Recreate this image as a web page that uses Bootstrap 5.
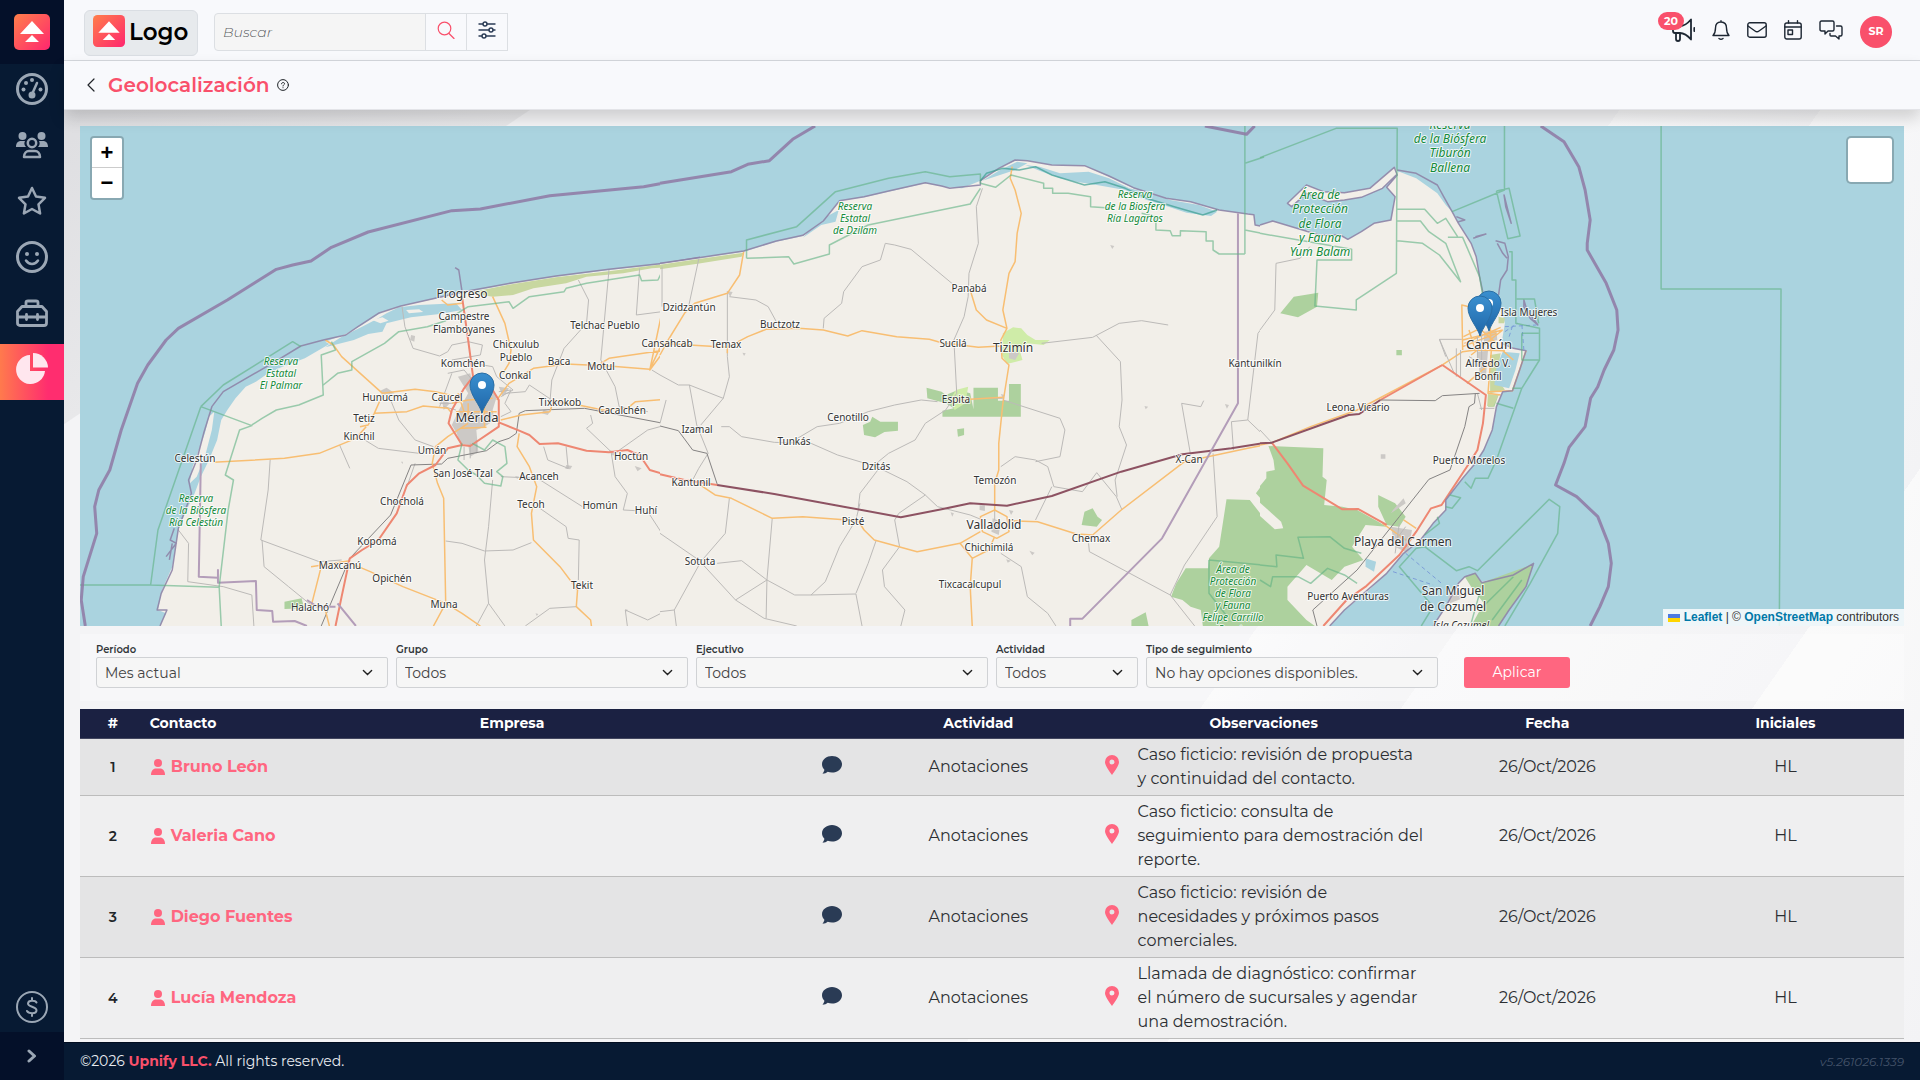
<!DOCTYPE html>
<html lang="es">
<head>
<meta charset="utf-8">
<meta name="viewport" content="width=device-width, initial-scale=1">
<title>Geolocalización</title>
<link href="https://cdn.jsdelivr.net/npm/bootstrap@5.3.0/dist/css/bootstrap.min.css" rel="stylesheet">
<style>
:root{--navy:#071a33;--pink:#ff6680;--brand:#f9506b}
body{font-family:Montserrat,Inter,"Noto Sans",sans-serif;font-size:16px;color:#212529;background:#f4f4f6}
svg{display:block;flex:none}
.ln{fill:none;stroke:currentColor;stroke-linecap:round;stroke-linejoin:round}
.side{width:64px;background:var(--navy);color:#9ba7b5;flex:none}
.side-top{height:64px;background:#041029}
.side-end{height:48px;background:#041029;color:#9ba7b5}
.side-item{height:56px;padding-bottom:6px;color:#9ba7b5}
.side-item.low{padding:6px 0 0}
.side-item.on{background:linear-gradient(90deg,#ff7a4d,#ff2d6f 75%);color:#ffe6ee}
.topbar{height:61px;background:#f8f9fc;border-bottom:1px solid #d5d8dd;padding:0 28px 0 20px}
.logo-box{width:114px;height:46px;margin-top:5px;background:#e7eaed;border:1px solid #dadee3;border-radius:6px;color:#000;font-size:23px;font-weight:600;padding:0 0 0 8px}
.logo-box svg{margin-bottom:4px}
.finder{width:294px;height:38px;margin-left:16px;margin-top:4px}
.finder .form-control{background:#f5f5f5;border-color:#dcdfe3;font-style:italic;font-weight:300;font-size:14px;padding:0 8px;color:#555;border-radius:4px}
.finder .btn{width:42px;border-color:#dcdfe3;background:#f8f9fc;padding:0 11px 4px;border-radius:0;color:#2a3b55}
.top-icons{gap:17px}
.top-icons a{color:#1d2733}
.news-badge{left:-13px;top:-6px;width:26px;height:18px;line-height:18px;border-radius:9px;background:var(--brand);color:#fff;font-size:11px;font-weight:700;text-align:center}
.avatar{width:32px;height:32px;margin-top:3px;border-radius:50%;background:var(--brand);color:#fff;font-size:11px;font-weight:700}
.titlebar{height:49px;background:#f8f9fc;border-bottom:1px solid #e3e4e8;box-shadow:0 8px 16px rgba(0,0,0,.16);padding:0 20px;position:relative;z-index:2}
.titlebar h1{font-size:20px;font-weight:600;color:var(--brand);margin:0 8px 0 13px}
.work{padding:16px 16px 3px;background:
 linear-gradient(146deg,#dedee1 0,#e8e8ea 260px,transparent 261px),
 linear-gradient(125deg,transparent 62%,#f9f9fa 62%,#f2f2f4 70%,#f8f8f9 70%,#f3f3f5 84%,#fafafa 84%,#f3f3f5)}
.map-box{height:500px;background:#aad3df;overflow:hidden}
.map-svg{width:100%;height:500px}
.map-svg path{vector-effect:non-scaling-stroke;fill:none;stroke-linejoin:round}
.map-svg .land{fill:#f2efe9}
.map-svg .sea{fill:#aad3df}
.map-svg .wood{fill:#add19e}
.map-svg .mangrove{fill:#c8d7a0}
.map-svg .town{fill:#ccc9c6}
.map-svg .suburb{fill:#cfeca8}
.map-svg .limit{stroke:#8f79a5;stroke-width:3;opacity:.85}
.map-svg .shore{stroke:#8f85a8;stroke-width:1.5;opacity:.9}
.map-svg .state{stroke:#b39db9;stroke-width:2}
.map-svg .park{stroke:#5fb283;stroke-width:1.5;opacity:.6}
.map-svg .minor{stroke:#bcbab8;stroke-width:1}
.map-svg .main-rd{stroke:#f8be72;stroke-width:1.5}
.map-svg .trunk{stroke:#ee8772;stroke-width:2}
.map-svg .rail{stroke:#858383;stroke-width:1}
.map-svg .toll{stroke:#8d5262;stroke-width:2}
.map-svg .ferry{stroke:#7d9ed8;stroke-width:1;stroke-dasharray:4 3}
.map-svg .reef{stroke:#3c9f91;stroke-width:1.5;opacity:.7}
.map-svg text{font-family:"Noto Sans",sans-serif;font-size:10px;text-anchor:middle;fill:#333;stroke:#fff;stroke-opacity:.75;stroke-width:2px;paint-order:stroke;stroke-linejoin:round}
.map-svg .t12 text{font-size:12px}
.map-svg .t13 text{font-size:13px}
.map-svg .nat text{fill:#148a3a;font-style:italic}
.zoomer{left:10px;top:10px;border:2px solid rgba(0,0,0,.2);border-radius:4px;background-clip:padding-box}
.zoomer button{width:30px;height:30px;border:0;background:#fff;color:#000;font:bold 22px/28px "Liberation Sans",sans-serif;padding:0}
.zoomer button:first-child{border-bottom:1px solid #ccc;border-radius:2px 2px 0 0}
.zoomer button:last-child{border-radius:0 0 2px 2px}
.layers{right:10px;top:10px;width:48px;height:48px;border:2px solid rgba(0,0,0,.2);border-radius:5px;background:#fff;background-clip:padding-box}
.credits{right:0;bottom:0;height:17px;padding:0 5px;background:rgba(255,255,255,.8);font:12px/17px "Liberation Sans",sans-serif;color:#333}
.credits a{color:#0078a8;text-decoration:none;font-weight:700}
.filters{margin-top:8px;padding:8px 16px 13px;background:rgba(255,255,255,.3);gap:8px;height:67px}
.filters label{display:block;font-size:10px;line-height:14px;font-weight:600;color:#33373b}
.filters .form-select{height:31px;font-size:14px;line-height:20px;padding:0 32px 0 8px;border:1px solid #d0d2d5;border-radius:2px 2px 4px 4px;background-color:#f6f6f6;color:#444;background-size:11px 11px;background-position:right 14px center;
--bs-form-select-bg-img:url("data:image/svg+xml,%3csvg xmlns='http://www.w3.org/2000/svg' viewBox='0 0 16 16'%3e%3cpath fill='none' stroke='%23222' stroke-width='2' stroke-linecap='round' d='m2 5 6 6 6-6'/%3e%3c/svg%3e")}
.w-wide{width:292px}.w-slim{width:142px}
.btn-apply{width:106px;height:31px;margin-left:18px;padding:0;border:0;border-radius:3px;background:var(--pink);color:#fff;font-size:14px}
.report{margin:8px 0 0;table-layout:fixed;--bs-table-bg:transparent}
.report>:not(caption)>*>*{padding:4px;border-bottom:1px solid #bcbcbc;vertical-align:middle;line-height:24px;background:transparent;text-align:center}
.report thead th{background:#1b2142;color:#fff;font-size:14px;font-weight:700;line-height:21px;border-color:#42465f}
.report tbody tr{background:#efeff0}
.report tbody tr:nth-child(odd){background:#e4e4e5}
.report tbody td{font-size:16px;color:#2c2f33}
.report tbody th{font-size:14px;font-weight:600}
.report .to-left{text-align:left}
.person{color:var(--pink);font-weight:700;font-size:16px;text-decoration:none;gap:5px}
.note{gap:19px;text-align:left;padding-left:1px;white-space:nowrap}
.foot{height:38px;background:var(--navy);border-top:1px solid #020d20;color:#e8ebf0;font-size:14px;padding:0 16px}
.foot b{color:var(--brand)}
.foot i{color:#44536a;font-size:12px}
</style>
<script src="https://cdn.jsdelivr.net/npm/bootstrap@5.3.0/dist/js/bootstrap.bundle.min.js"></script>
</head>
<body>
<svg width="0" height="0" class="position-absolute" aria-hidden="true">
<defs>
<linearGradient id="warm" x1="0" y1="0" x2="1" y2="1"><stop offset="0" stop-color="#ff7f4a"/><stop offset="1" stop-color="#ff266f"/></linearGradient>
<linearGradient id="blue" x1="0" y1="0" x2="0" y2="1"><stop offset="0" stop-color="#3a8fcf"/><stop offset="1" stop-color="#1f66a8"/></linearGradient>
<symbol id="brand" viewBox="0 0 36 36"><rect width="36" height="36" rx="5" fill="url(#warm)"/><path fill="#fff" d="M18 7 30 20H6zM18 21l7 7H11z"/></symbol>
<symbol id="user" viewBox="0 0 16 16"><circle cx="8" cy="4" r="4"/><path d="M1 16c0-4 2-6.500 5-6.500h4c3 0 5 2.500 5 6.500z"/></symbol>
<symbol id="talk" viewBox="0 0 20 18"><path d="M10 0c5.500 0 10 3.600 10 8.300s-4.500 8.300-10 8.300c-1.500 0-3-.3-4.300-.8C4.500 16.800 2.600 17.800.5 17.800c1-1.200 1.700-2.700 1.900-4C.9 12.300 0 10.400 0 8.300 0 3.600 4.500 0 10 0z"/></symbol>
<symbol id="place" viewBox="0 0 14 20"><path fill-rule="evenodd" d="M7 0a7 7 0 0 1 7 7c0 3.500-4.500 9.500-7 13-2.500-3.500-7-9.500-7-13a7 7 0 0 1 7-7zm0 4.500a2.500 2.500 0 1 0 0 5 2.500 2.500 0 0 0 0-5z"/></symbol>
<g id="marker"><path d="M0 0C-2-8-12-18-12-28a12 12 0 0 1 24 0C12-18 2-8 0 0z" style="fill:url(#blue);stroke:#2a6ea5;stroke-width:1"/><circle cx="0" cy="-28" r="4" fill="#fff"/></g>
</defs>
</svg>
<div class="d-flex min-vh-100">
<nav class="side d-flex flex-column" aria-label="Principal">
 <a href="#" class="side-top d-flex align-items-center justify-content-center" aria-label="Inicio"><svg width="36" height="36"><use href="#brand"/></svg></a>
 <a href="#" class="side-item d-flex align-items-center justify-content-center" aria-label="Tablero"><svg class="ln" width="32" height="32" viewBox="0 0 32 32" stroke-width="3"><circle cx="16" cy="16" r="14.500"/><path d="m17 19 4-9" stroke-width="2.500"/><circle cx="16" cy="22" r="2" fill="currentColor"/><g fill="currentColor" stroke="none"><circle cx="7.500" cy="16.500" r="2"/><circle cx="10" cy="10" r="2"/><circle cx="16" cy="7" r="2"/><circle cx="24.500" cy="16.500" r="2"/></g></svg></a>
 <a href="#" class="side-item d-flex align-items-center justify-content-center" aria-label="Contactos"><svg width="32" height="28" viewBox="0 0 32 28" fill="currentColor"><circle cx="6.500" cy="5" r="4"/><circle cx="25.500" cy="5" r="4"/><path d="M0 16c0-4 2-6 5-6h4c-1 2-1 4 1 6zM32 16c0-4-2-6-5-6h-4c1 2 1 4-1 6z"/><g class="ln" stroke-width="2.500"><circle cx="16" cy="12" r="4.200"/><path d="M8 26c0-4 2.500-6 5-6h6c2.500 0 5 2 5 6z"/></g></svg></a>
 <a href="#" class="side-item d-flex align-items-center justify-content-center" aria-label="Favoritos"><svg class="ln" width="30" height="30" viewBox="0 0 30 30" stroke-width="2.500"><path d="m15 2 4 8.500 9 1.300-6.500 6.500 1.600 9.200L15 23l-8.100 4.500 1.600-9.200L2 11.800l9-1.300z"/></svg></a>
 <a href="#" class="side-item d-flex align-items-center justify-content-center" aria-label="Clientes"><svg class="ln" width="32" height="32" viewBox="0 0 32 32" stroke-width="3"><circle cx="16" cy="16" r="14.500"/><path d="M10 19.500c3 4.500 9 4.500 12 0" stroke-width="2.500"/><g fill="currentColor" stroke="none"><circle cx="11" cy="13" r="2"/><circle cx="21" cy="13" r="2"/></g></svg></a>
 <a href="#" class="side-item d-flex align-items-center justify-content-center" aria-label="Herramientas"><svg class="ln" width="32" height="28" viewBox="0 0 32 28" stroke-width="2.800"><path d="M10 7V3.500Q10 2 12 2h8q2 0 2 1.500V7M6 7.500h20l4.500 5V24q0 2.500-2.500 2.500H4Q1.500 26.500 1.500 24V12.500zM2 18h28M10.500 15.500v5M21.500 15.500v5"/></svg></a>
 <a href="#" class="side-item on d-flex align-items-center justify-content-center" aria-label="Reportes" aria-current="page"><svg width="32" height="32" viewBox="0 0 32 32" fill="currentColor"><path d="M14 2v16h15A14.500 14.500 0 1 1 14 2z"/><path d="M17 0a15 15 0 0 1 15 14.500H17z"/></svg></a>
 <a href="#" class="side-item low mt-auto d-flex align-items-center justify-content-center" aria-label="Ventas"><svg class="ln" width="32" height="32" viewBox="0 0 32 32" stroke-width="2"><circle cx="16" cy="16" r="15"/><path d="M20.500 11.500c-1-2-8-3-8.500.8-.4 4 8.500 2.800 8.500 7 0 4-8 3.500-9.500.7M16 7v2.500M16 22.500V25"/></svg></a>
 <button type="button" class="side-end border-0 d-flex align-items-center justify-content-center" aria-label="Expandir"><svg class="ln" width="10" height="14" viewBox="0 0 10 14" stroke-width="3"><path d="m2 2 5.500 5L2 12"/></svg></button>
</nav>
<div class="flex-grow-1 d-flex flex-column" style="min-width:0">
<header class="topbar d-flex align-items-center">
 <a href="#" class="logo-box d-flex align-items-center gap-1 text-decoration-none"><svg width="32" height="32"><use href="#brand"/></svg>Logo</a>
 <form class="finder input-group flex-nowrap">
  <input class="form-control" type="search" placeholder="Buscar" aria-label="Buscar">
  <button class="btn" type="button" aria-label="Buscar"><svg class="ln" style="color:#f9506b" width="18" height="18" viewBox="0 0 18 18" stroke-width="1.200"><circle cx="7.500" cy="7.500" r="6.300"/><path d="m12 12.500 5 5"/></svg></button>
  <button class="btn" type="button" aria-label="Filtros"><svg class="ln" width="18" height="18" viewBox="0 0 18 18" stroke-width="1.400"><path d="M1 3h4M9 3h8M1 9h10M15 9h2M1 15h3M8 15h9"/><circle cx="7" cy="3" r="2"/><circle cx="13" cy="9" r="2"/><circle cx="6" cy="15" r="2"/></svg></button>
 </form>
 <div class="top-icons d-flex align-items-center ms-auto">
  <a href="#" class="position-relative" aria-label="Novedades"><svg class="ln" width="24" height="24" viewBox="0 0 24 24" stroke-width="1.800"><path d="M2 8h7c4 0 8-3 11-6.500v20C17 18 13 15 9 15H4q-2 0-2-2zM5 15v6q0 2 2 2t2-2v-6M23.300 10v3"/></svg><span class="news-badge position-absolute">20</span></a>
  <a href="#" aria-label="Avisos"><svg class="ln" width="18" height="20" viewBox="0 0 18 20" stroke-width="1.400"><path d="M9 2c-4 0-5.500 3-5.500 6 0 4-1 6-2.500 7.500h16C15.500 14 14.500 12 14.500 8c0-3-1.500-6-5.500-6zM9 .8V2M7 18.500q2 1.500 4 0"/></svg></a>
  <a href="#" aria-label="Correo"><svg class="ln" width="20" height="16" viewBox="0 0 20 16" stroke-width="1.400"><rect x=".8" y=".8" width="18.400" height="14.400" rx="2"/><path d="m1 4 7 5q2 1.500 4 0l7-5"/></svg></a>
  <a href="#" aria-label="Agenda"><svg class="ln" width="18" height="20" viewBox="0 0 18 20" stroke-width="1.400"><rect x=".8" y="3" width="16.400" height="16" rx="2"/><path d="M1 7h16M4.500.8V3M13.500.8V3"/><rect x="4" y="10" width="4.500" height="4.500"/></svg></a>
  <a href="#" aria-label="Chat"><svg class="ln" width="24" height="20" viewBox="0 0 24 20" stroke-width="1.400"><path d="M2.500 1h11Q15 1 15 2.500v7q0 1.500-1.500 1.500H9l-3 3v-3H2.500Q1 11 1 9.500v-7Q1 1 2.500 1zM17.500 6h4Q23 6 23 7.500v7q0 1.500-1.500 1.500H20v3l-3.500-3H12q-1 0-1-1v-1.500"/></svg></a>
  <a href="#" class="avatar d-flex align-items-center justify-content-center text-decoration-none text-white">SR</a>
 </div>
</header>
<div class="titlebar d-flex align-items-center">
 <a href="#" aria-label="Volver" class="text-dark" style="margin-left:3px"><svg class="ln" width="8" height="14" viewBox="0 0 8 14" stroke-width="1.200"><path d="M7 1 1 7l6 6"/></svg></a>
 <h1>Geolocalización</h1>
 <a href="#" aria-label="Ayuda" class="text-dark"><svg class="ln" width="12" height="12" viewBox="0 0 12 12" stroke-width="1"><circle cx="6" cy="6" r="5.400"/><path d="M4.500 4.800C4.500 3 7.500 3 7.500 4.700 7.500 5.800 6 5.800 6 7M6 8.700v.1"/></svg></a>
</div>
<main class="work flex-grow-1">
 <div class="map-box position-relative">
 <svg class="map-svg" viewBox="80 126 1824 500" preserveAspectRatio="xMidYMid slice" role="img" aria-label="Mapa de Yucatán y Quintana Roo">
 <!-- west: Celestún to Motul -->
 <g transform="translate(60 110) scale(.40816 .33333)">
  <path class="land" d="M1568 445 1480 462 1345 480 1215 500 1110 520 1000 545 930 563 835 588 790 605 740 645 700 672 650 695 660 702 600 745 545 770 510 790 480 815 455 830 430 865 410 900 395 930 385 990 365 1050 345 1100 330 1150 310 1200 290 1260 275 1370 250 1440 240 1500 260 1510 245 1548H1568z"/>
  <path class="land" d="M355 970 365 920 378 905 372 960 355 1040 335 1100 318 1120 325 1070z"/>
  <path class="sea" d="M830 592 880 585 970 580 985 600 930 612 860 622 800 640 790 665 755 672 720 690 650 712 690 680 740 650 780 625 800 610z"/>
  <path class="land" d="M765 630 790 622 805 632 785 640zM848 600 880 598 890 606 855 610z"/>
  <path class="mangrove" d="M1000 548 1110 522 1215 502 1345 484 1568 448V465L1450 475 1380 490 1290 500 1240 520 1160 535 1110 555 1060 560z"/>
  <path class="wood" d="M550 1475 592 1465 598 1495 550 1497zM985 940 1000 950 1000 1000 985 985z"/>
  <path class="town" d="M975 800 1005 790 1010 815 1050 830 1070 860 1060 900 1065 930 1040 950 1020 960 1025 1025 1005 1040 1000 1005 980 1000 972 970 960 945 975 905 1000 850zM785 842 800 833 820 850 790 856zM935 865 955 880 940 900zM1240 1065 1255 1068 1250 1078 1238 1076zM1408 1068 1425 1075 1415 1084zM1345 1020 1362 1025 1355 1038zM860 675 870 678 868 695 858 690zM1185 900 1200 905 1195 915 1180 910zM1075 830 1100 835 1085 860zM1115 1098 1125 1100 1120 1107zM835 1055 840 1055 840 1062zM1165 1510 1172 1512 1168 1518zM1385 1497 1392 1500 1386 1506z"/>
  <path class="minor" d="M838 590 845 650 865 715 930 738 950 725 960 705 1000 695 1035 705 1030 735 960 750M960 790 945 840 930 890M950 790 990 780 1010 810M1010 760 1060 770 1070 800 1110 840 1080 860M1075 845 1105 840 1090 880 1105 905 1080 920M1150 825 1205 870 1190 890M1150 825 1140 845 1090 850M1345 480 1325 750 1360 830 1370 890 1440 905M1270 510 1295 570 1290 640 1235 715 1205 810 1200 880M1420 475 1412 615 1475 605 1480 470M1300 915 1305 940 1290 955 1350 1025 1360 1100 1390 1150 1380 1200 1410 1202M1450 780 1510 825 1550 823 1568 840M1510 825 1480 880 1490 935M1185 1010 1195 1050 1245 1075 1240 1010M1365 1025 1440 960 1500 940M1080 1100 1170 1105 1280 1190M1170 1190 1240 1250 1245 1285 1272 1290 1270 1410M945 1293 985 1300 1040 1323 1110 1320 1155 1298M1060 1110 1050 1250 1040 1350 1050 1480 1020 1548M1050 1480 1090 1548M1440 1205 1480 1280 1540 1340 1568 1360M1265 1490 1200 1495 1140 1548M1568 1395 1530 1420 1505 1490 1440 1530 1385 1500 1390 1548M515 1048 510 1140 492 1290 635 1355 690 1350M495 1290 500 1370 560 1430 620 1490M740 985 780 1015 880 1030M810 870 830 930 870 990 915 1010M685 1005 710 1075M870 1060 850 1130M290 1260 315 1300 313 1415 400 1430 470 1455 475 1548M1540 925 1560 945M930 880H960M940 890 970 900M990 1010V1050M1005 1000V1045M1020 990V1030"/>
  <path class="rail" d="M640 1548 710 1345 810 1215 860 1065 935 1062 950 1045 1045 1022 1075 995 1100 985 1118 970 1125 910 1140 902 1285 895 1500 945 1520 975 1550 1020 1568 1025"/>
  <path class="main-rd" d="M1060 560 1090 640 1105 720 1100 760 1085 790M650 690 670 705 690 740 790 850 870 838 920 845 955 855M770 910 850 905 890 888 950 895 960 910M790 855 770 910 755 945 735 950M750 950 725 985 635 1030 550 1045 375 1057M1000 940 950 980 920 1010 912 1060 925 1120 940 1165 945 1480 915 1548M712 1360 760 1385 840 1430 945 1480 985 1510 1030 1548M1125 970 1120 1010 1150 1070 1168 1130 1155 1210 1160 1290 1225 1370 1268 1440 1265 1490 1300 1530 1302 1548M640 1370 615 1490M615 1370 710 1352M1070 870 1100 820 1160 775 1240 762 1345 768 1445 778 1475 700 1568 700M1325 760 1345 745 1530 712M1080 930 1130 915 1200 905 1210 870 1260 885M1270 885 1330 900 1390 895 1410 875 1485 868M1475 605 1445 780 1500 690 1535 600 1568 570M935 570 950 585 985 580M650 1500 660 1548M960 880 1000 870 1060 865M1000 880 1000 930M1040 870V950M975 850 990 905M970 905H1070M985 955 1045 952"/>
  <path class="trunk" d="M985 560 1000 690 1012 800 990 835 960 900 952 940 985 1005 1005 1008 1075 950 1075 870 1060 840M1075 937 1125 962 1150 975 1175 1002 1220 1000 1290 1022 1345 1027 1390 1020 1420 1035 1445 1080 1500 1100 1568 1112M985 1005 950 1015 920 1065 880 1090 850 1125 825 1210 780 1290 740 1320 710 1345 690 1460 675 1548"/>
  <path class="shore" d="M1568 442 1480 460 1345 478 1215 498 1110 518 1050 532 985 546 930 562 835 588 780 610 730 650 700 675 645 690 590 708 520 760 400 845 372 890 352 970 335 1050 315 1110 322 1150 310 1190 290 1255 275 1380 248 1450 238 1500 262 1500 245 1548M985 545 977 480 968 473M280 1255 270 1290 285 1300 260 1340M268 1350 275 1300"/>
  <path class="state" d="M345 1060 340 1400 387 1403V1380L387 1418 480 1413 482 1500 520 1503 522 1535 575 1533 605 1548M680 1480 725 1548M675 1490 630 1490 605 1470"/>
  <path class="park" d="M345 890 400 825 570 695 590 710M345 890 240 1260 222 1425H49M222 1425 390 1432 395 1548M345 890 470 947 440 960 405 1095 425 1110 412 1200 390 1430M470 945 495 925 530 900 585 885 645 855 640 735 675 720 665 695M645 825 680 790 715 780V755L795 700 830 665 900 650 945 632 1000 590 1100 575 1110 595 1150 560 1235 545 1240 535 1290 520 1420 495 1425 512 1465 510 1475 485 1568 475M985 1000 975 1050 1000 1080 1020 1095 1040 1120 1080 1128 1085 1100 1070 1085 1095 1060 1090 1010 1060 990 1040 1020 1010 1000"/>
  <path class="limit" d="M62 1548 52 1470 57 1400 90 1270 85 1190 95 1140 122 1080 150 960 190 820 215 765 260 690 290 655 410 570 530 478 570 465 615 453 665 412 755 366 960 302 1030 297 1200 257 1430 230 1470 221"/>
 </g>
 <!-- centre: Izamal to X-Can -->
 <g transform="translate(660 110) scale(.40816 .33333)">
  <path class="land" d="M0 462 95 445 205 425 285 395 350 378 400 335 440 272 500 262 560 245 650 220 700 232 740 235 785 212 830 175 870 152 900 152 960 165 1040 167 1100 200 1160 235 1240 265 1300 275 1370 300 1440 312 1455 314 1458 345 1480 350 1510 333 1568 352 1620 375V1548H0z"/>
  <path class="mangrove" d="M0 464 95 447 205 428 200 440 100 460 0 478z"/>
  <path class="sea" d="M350 383 375 350 400 325 438 300 430 335 395 345zM790 212 830 182 875 155 900 160 870 180 820 200zM895 165 930 170 980 190 1050 185 1100 205 1150 235 1200 250 1250 270 1320 285 1365 305 1350 318 1290 308 1240 288 1180 265 1140 240 1070 225 1020 215 980 205 930 182z"/>
  <path class="wood" d="M653 833 690 845 700 855 730 840 760 850 768 898V833H828V872H855V822H884V920H692V902L720 895 700 880 655 865zM497 945 515 935 520 920 540 935 583 935V962L550 966 527 982 500 975zM1033 1245 1040 1205 1060 1195 1072 1220 1083 1230 1070 1250zM1155 1530 1190 1507 1197 1548H1155zM728 958 745 955 745 975 730 980zM1485 1010 1620 1012V1548H1330L1325 1500 1300 1490 1280 1470 1252 1460 1265 1420 1288 1375H1343L1345 1345 1370 1310 1388 1168 1445 1170 1480 1225 1505 1255 1525 1255 1525 1235 1490 1190 1460 1150 1490 1100 1480 1080 1500 1085 1505 1050z"/>
  <path class="suburb" d="M840 670 865 652 885 655 900 675 920 690 955 690 940 705 900 700 880 715 888 750 850 762 838 735zM725 840 755 830 748 880 722 900 710 870z"/>
  <path class="town" d="M855 720 880 730 870 750 855 745zM783 1186 796 1186 796 1203 783 1200zM815 1225 835 1235 830 1275 812 1265zM855 1200 866 1203 860 1215zM905 1322 918 1328 912 1336zM1384 882 1394 885 1389 896zM1103 405 1113 408 1108 417zM1187 888 1196 890 1190 898zM88 950 100 948 98 965 88 962zM163 543 178 546 172 560zM712 1207 720 1210 716 1220zM848 1348 860 1352 852 1358zM835 852 845 855 840 865zM202 728 210 730 206 738z"/>
  <path class="minor" d="M95 447 70 590M5 470V590M165 545 165 740 170 800 155 865 100 945M170 560 235 570 265 590 285 635M0 795 45 825H72L155 865M72 825 90 945 118 1030 95 1075 80 1110M15 870 0 940M400 655 402 625 445 580 450 545 495 470 540 450 552 400 575 405 615 418 720 525M790 235 775 290 780 400 757 490 755 560 745 620 720 690 727 850 700 900 650 940 625 990 560 1030 530 1060M680 875 640 870 575 885 510 905 440 940 385 950 330 990M150 950 170 950 200 980 280 997 370 1000 435 1035 530 1070 605 1115 650 1155 585 1210 575 1230 587 1310 545 1380 550 1430 600 1500 590 1548M650 1155 680 1190 760 1215 790 1230M490 1180 480 1230 440 1310 405 1415 370 1455 480 1452 495 1548M540 1070 490 1150 485 1200M530 1290 510 1360 480 1450M170 1165 160 1270 100 1355 35 1500 40 1548M0 1270 95 1350 185 1470 255 1525 335 1548M140 1360 200 1352 262 1410 185 1470M262 1410 275 1225M262 1410 260 1525M262 1410 330 1455H370M0 1505 35 1500M840 870 980 925 992 960 980 1040 920 1055M770 865H840M835 1070 870 1040 920 1050 950 1070 965 1130 1035 1145 1070 1088 1118 1160 1132 1200M935 700 1060 682 1125 640 1180 632 1245 645M1068 675 1128 755 1132 870 1125 950 1143 1005 1115 1110 1120 1160M960 1130 920 1230M835 1330 885 1370 900 1460 950 1510 970 1548M1050 1300 1052 1325 1250 1455 1310 1548M1250 1455 1285 1365 1365 1220 1355 1030M1278 880 1325 890 1332 872M1278 880 1300 1035M1405 1020 1400 935 1440 930 1500 1000M1440 930 1465 670 1502 610 1510 460 1568 445M820 1200V1230"/>
  <path class="main-rd" d="M205 425 195 495 165 550 85 580 60 610 20 690 0 735M0 700 165 712 215 680 260 658 340 655 400 660 460 678 495 662 580 680 660 688 690 698 780 712 835 708M165 712V730M760 540 775 600 800 630 850 655 840 600 855 490 870 455 875 370 885 310 870 240 858 205 863 170M850 655 835 690 838 745 855 765 840 880 830 1000 830 1080 820 1120V1200M820 1200 850 1220 855 1265 825 1285 790 1265 785 1220 820 1200M80 1110 135 1155 175 1165 275 1225 350 1220 485 1232 500 1260 525 1290 630 1325 735 1300 785 1265M735 1300 765 1345 760 1430 765 1548M765 1345 805 1320 820 1280M855 1232 925 1235 1020 1272 1060 1275 1130 1200 1285 1055 1440 1015 1500 1000M840 862 730 870"/>
  <path class="rail" d="M0 948 45 962 80 1020 115 1030 140 1122"/>
  <path class="trunk" d="M0 1093 60 1110 140 1125"/>
  <path class="toll" d="M140 1125 280 1152 450 1190 590 1222 690 1198 760 1180 850 1187 960 1158 1130 1085 1280 1033 1400 1015 1500 995"/>
  <path class="shore" d="M0 460 95 443 205 423 285 393 350 376 400 333 440 272 500 260 560 243 650 218 690 228 710 235 785 225 785 212 830 175 870 150 900 152 960 165 1040 167 1100 198 1160 233 1240 265 1300 275 1370 300 1440 312 1455 314 1458 345 1480 350 1510 333"/>
  <path class="state" d="M1416 310V880L1230 1285 1035 1526H1005V1548"/>
  <path class="park" d="M212 445V390L335 350 430 245 560 205 650 185 710 200 785 192V220L822 232 860 195 940 220 940 235H962V250H1000L1055 260V290L1110 295M785 235 760 282 510 345 415 405V432L328 462 315 440 212 445M1180 310 1215 320V360L1250 362 1255 377H1275V362L1338 365V393H1355V420L1370 432H1433M1433 48V432M1433 160 1480 141M1433 360 1480 371M1345 1350 1470 1364M1345 1350 1345 1450 1390 1520"/>
  <path class="limit" d="M0 220 175 185 215 163 268 152 325 88 380 48M1335 48 1437 73 1457 48"/>
  <path class="reef" d="M785 212 800 190 840 175 880 180 920 170 960 195 1040 225 1090 215 1140 235 1200 268 1260 290 1330 315 1365 300"/>
 </g>
 <!-- east: Holbox to Cozumel -->
 <g transform="translate(1260 110) scale(.42222 .33333)">
  <path class="sea" d="M0 330H110V400H0z"/>
  <path class="land" d="M0 345 30 333 95 358 140 375 190 375 208 388 240 365 270 340 310 330 320 260 300 232 325 195 330 185 370 205 420 250 440 285 455 305 470 340 500 400 512 440 520 500 530 560 570 590 580 640 572 700 600 715 630 722 615 780 598 842 575 845 560 890 550 960 530 1020 510 1060 480 1105 440 1170 440 1200 410 1240 380 1290 340 1330 300 1390 250 1450 200 1500 165 1548H0z"/>
  <path class="land" d="M65 280 110 225 150 245 200 248 260 235 318 172 330 190 290 235 240 262 200 270 160 275 110 250 75 290zM485 1400 510 1390 525 1415 600 1395 648 1360 630 1430 590 1500 565 1548H410L440 1490 470 1420z"/>
  <path class="wood" d="M20 1008 150 1015 148 1100 158 1110 152 1185 195 1190 230 1200 280 1235 300 1250 250 1245 218 1310 245 1350 200 1370 170 1410 110 1365 65 1430 65 1470 110 1530 130 1548H0V1128L15 1105 15 1085 35 1080 32 1050zM280 1155 320 1180 345 1220 330 1250 300 1245 280 1190zM48 610 80 560 138 548 135 590 90 622zM323 720H336V736H323zM485 1400 510 1390 525 1418 648 1362 630 1430 590 1500 565 1548H500L530 1480 500 1430zM545 860 565 855 555 890 540 890z"/>
  <path class="land" d="M0 1178 50 1235 55 1255 35 1258 0 1218z"/>
  <path class="mangrove" d="M565 620 580 625 578 640 565 640zM545 735 570 730 560 800 580 840 545 850zM540 852 565 855 552 890 538 888z"/>
  <path class="sea" d="M575 725 615 730 605 780 590 835 555 825 560 770zM250 1345 275 1355 270 1385 250 1370z"/>
  <path class="town" d="M530 665 560 660 562 690 530 700zM515 725 540 722 535 800 520 790zM315 1200 340 1165 345 1180 310 1210zM310 1250 360 1260 350 1330 320 1310zM286 1033 297 1033 297 1046 286 1046zM445 1460 470 1440 480 1465 450 1480z"/>
  <path class="main-rd" d="M480 720 478 585 495 590M480 690 575 660M480 710 560 670M500 735 575 660M482 680 530 650M484 700 570 652M495 660 510 720 480 725 432 765M510 720 580 722M545 640 548 720 540 850 570 855M515 650 560 700M0 1005 28 998 120 950 230 900 432 765M630 722 598 842 540 845M490 820 545 760M290 1240 345 1290M340 1230 370 1255M575 722 600 750"/>
  <path class="minor" d="M0 660 35 600 38 460 95 445 118 410M478 688H425L460 790M425 688 440 740M465 715V800M475 720V800M515 680V770M525 670V760M495 740 540 770M0 960 28 998M520 895H555M515 850 525 900M300 1290H350M310 1310 345 1250M320 1330 330 1240"/>
  <path class="trunk" d="M432 765 535 855 528 940 515 1020 490 1070 430 1185 405 1195 370 1265 330 1335 250 1430 205 1470 150 1548M432 765 285 870M28 998 65 1060 102 1127 195 1198 232 1197 300 1245"/>
  <path class="toll" d="M0 1000 28 998 150 942 210 915 235 912 285 870"/>
  <path class="rail" d="M285 870 415 872 432 857 520 850M510 850 508 880 495 890 485 950 450 1080 400 1108 330 1220 230 1380 125 1500 135 1548"/>
  <path class="shore" d="M0 345 30 333 95 358 140 375 190 375 208 388 240 365 270 340 310 330 320 260 300 232 325 195 318 172 260 235 200 248 150 245 110 225 65 280 75 290 110 250 160 275 200 270 240 262 290 235 325 192M325 180 370 190 420 225 435 260 455 305 470 340 500 400 512 440 520 500 530 560M465 320 485 330 470 335M505 385 535 372 510 380M558 392 580 400 588 440 585 480 570 510 565 555M562 400 575 430 585 445M578 255 595 340 582 290zM625 570 632 600 658 645 640 625 625 590zM572 700 600 715 630 722 615 780 598 842 575 845 560 890 550 960 530 1020 510 1060 480 1105 440 1170 440 1200 410 1240 380 1290 340 1330 300 1390 200 1500 165 1548M410 1548 440 1490 470 1420 485 1400 510 1390 525 1418 600 1395 648 1360 630 1430 590 1500 565 1548"/>
  <path class="ferry" d="M345 1330 430 1420M315 1385 410 1425M580 665 610 640M590 680 600 640M625 720 620 640M580 650 655 645"/>
  <path class="park" d="M0 143 180 55H325L323 490 228 570V600L130 588 135 450H217V418L0 370M579 48V240L455 305M560 243 590 235 616 378 587 386 560 243M325 298H390L420 340 440 325 468 380M325 392 385 400 425 435 475 515 440 400 400 365 380 333H325M445 382H480L520 500 528 560M590 425 597 425V510H606V640L662 655V750L620 835 560 1050 540 1105H510L500 1135 485 1115M608 567H650L660 640M620 670H660M620 670V750H660M598 835 620 835M560 880 600 895M450 1155 475 1163 455 1195 440 1190M420 1220 425 1240 390 1275M382 1548 410 1490 330 1370 370 1315 390 1310 465 1382 495 1370 515 1382 685 1168 710 1190 705 1270 640 1420 580 1548M950 48V537H1234L1230 1548M0 1365 40 1370 38 1335 103 1345 90 1282 165 1280 200 1315 240 1330M0 1410 25 1430 30 1400 90 1400 120 1420 160 1375 200 1395 230 1420M520 1500 600 1400M550 1530 620 1410M500 1540 520 1450"/>
  <path class="limit" d="M665 48 720 95 755 170 770 240 782 330 775 400 775 420 820 520 845 600 848 660 838 720 815 780 800 830 783 865 770 950 732 1012 720 1060 700 1125 750 1160 800 1220 825 1300 832 1360 825 1430 805 1490 782 1548"/>
 </g>
 <g>
  <text x="464" y="320">Campestre</text><text x="464" y="333">Flamboyanes</text><text x="516" y="348">Chicxulub</text><text x="516" y="361">Pueblo</text><text x="605" y="329">Telchac Pueblo</text><text x="667" y="347">Cansahcab</text><text x="463" y="367">Komchén</text><text x="559" y="365">Baca</text><text x="601" y="370">Motul</text><text x="515" y="379">Conkal</text><text x="385" y="401">Hunucmá</text><text x="447" y="401">Caucel</text><text x="560" y="406">Tixkokob</text><text x="622" y="414">Cacalchén</text><text x="364" y="422">Tetiz</text><text x="359" y="440">Kinchil</text><text x="432" y="454">Umán</text><text x="195" y="462">Celestún</text><text x="463" y="477">San José Tzal</text><text x="631" y="460">Hoctún</text><text x="539" y="480">Acanceh</text><text x="402" y="505">Chocholá</text><text x="531" y="508">Tecoh</text><text x="600" y="509">Homún</text><text x="646" y="514">Huhí</text><text x="377" y="545">Kopomá</text><text x="340" y="569">Maxcanú</text><text x="392" y="582">Opichén</text><text x="582" y="589">Tekit</text><text x="310" y="611">Halachó</text><text x="444" y="608">Muna</text>
  <text x="689" y="311">Dzidzantún</text><text x="780" y="328">Buctzotz</text><text x="726" y="348">Temax</text><text x="969" y="292">Panabá</text><text x="953" y="347">Sucilá</text><text x="1255" y="367">Kantunilkín</text><text x="956" y="403">Espita</text><text x="848" y="421">Cenotillo</text><text x="697" y="433">Izamal</text><text x="794" y="445">Tunkás</text><text x="876" y="470">Dzitás</text><text x="995" y="484">Temozón</text><text x="1189" y="463">X-Can</text><text x="691" y="486">Kantunil</text><text x="853" y="525">Pisté</text><text x="1091" y="542">Chemax</text><text x="989" y="551">Chichimilá</text><text x="700" y="565">Sotuta</text><text x="970" y="588">Tixcacalcupul</text>
  <text x="1529" y="316">Isla Mujeres</text><text x="1488" y="367">Alfredo V.</text><text x="1488" y="380">Bonfil</text><text x="1358" y="411">Leona Vicario</text><text x="1469" y="464">Puerto Morelos</text><text x="1348" y="600">Puerto Aventuras</text><text x="1461" y="629" font-style="italic">Isla Cozumel</text>
 </g>
 <g class="t12"><text x="462" y="298">Progreso</text><text x="1013" y="352">Tizimín</text><text x="994" y="529">Valladolid</text><text x="1403" y="546">Playa del Carmen</text><text x="1453" y="595">San Miguel</text><text x="1453" y="611">de Cozumel</text></g>
 <g class="t13"><text x="477" y="422">Mérida</text><text x="1489" y="349">Cancún</text></g>
 <g class="nat">
  <text x="281" y="365">Reserva</text><text x="281" y="377">Estatal</text><text x="281" y="389">El Palmar</text>
  <text x="196" y="502">Reserva</text><text x="196" y="514">de la Biósfera</text><text x="196" y="526">Ría Celestún</text>
  <text x="855" y="210">Reserva</text><text x="855" y="222">Estatal</text><text x="855" y="234">de Dzilam</text>
  <text x="1135" y="198">Reserva</text><text x="1135" y="210">de la Biosfera</text><text x="1135" y="222">Ría Lagartos</text>
  <text x="1233" y="573">Área de</text><text x="1233" y="585">Protección</text><text x="1233" y="597">de Flora</text><text x="1233" y="609">y Fauna</text><text x="1233" y="621">Felipe Carrillo</text><text x="1233" y="633">Puerto</text>
 </g>
 <g class="nat t12"><text x="1450" y="129">Reserva</text><text x="1450" y="143">de la Biósfera</text><text x="1450" y="157">Tiburón</text><text x="1450" y="172">Ballena</text><text x="1320" y="199">Área de</text><text x="1320" y="213">Protección</text><text x="1320" y="228">de Flora</text><text x="1320" y="242">y Fauna</text><text x="1320" y="256">Yum Balam</text></g>
 <use href="#marker" x="482" y="413"/><use href="#marker" x="1489" y="331"/><use href="#marker" x="1480" y="336"/>
 </svg>
 <div class="zoomer position-absolute d-flex flex-column"><button type="button" aria-label="Acercar">+</button><button type="button" aria-label="Alejar">−</button></div>
 <button type="button" class="layers position-absolute" aria-label="Capas"></button>
 <div class="credits position-absolute d-flex align-items-center gap-1"><svg width="12" height="8" viewBox="0 0 12 8"><path fill="#4C7BE1" d="M0 0h12v4H0z"/><path fill="#FFD500" d="M0 4h12v4H0z"/></svg><span><a href="#">Leaflet</a> | © <a href="#">OpenStreetMap</a> contributors</span></div>
 </div>
 <form class="filters d-flex align-items-end">
  <div class="w-wide"><label for="periodo">Período</label><select class="form-select" id="periodo"><option>Mes actual</option></select></div>
  <div class="w-wide"><label for="grupo">Grupo</label><select class="form-select" id="grupo"><option>Todos</option></select></div>
  <div class="w-wide"><label for="ejecutivo">Ejecutivo</label><select class="form-select" id="ejecutivo"><option>Todos</option></select></div>
  <div class="w-slim"><label for="actividad">Actividad</label><select class="form-select" id="actividad"><option>Todos</option></select></div>
  <div class="w-wide"><label for="tipo">Tipo de seguimiento</label><select class="form-select" id="tipo"><option>No hay opciones disponibles.</option></select></div>
  <button type="button" class="btn btn-apply">Aplicar</button>
 </form>
 <table class="table report">
  <colgroup><col style="width:3.6%"><col style="width:18.1%"><col style="width:18.2%"><col style="width:2.7%"><col style="width:13.3%"><col style="width:18%"><col style="width:13.1%"><col style="width:13%"></colgroup>
  <thead><tr><th>#</th><th class="to-left">Contacto</th><th class="to-left">Empresa</th><th></th><th>Actividad</th><th>Observaciones</th><th>Fecha</th><th>Iniciales</th></tr></thead>
  <tbody>
  <tr><th>1</th><td class="to-left"><a href="#" class="person d-flex align-items-center"><svg width="16" height="16" fill="currentColor"><use href="#user"/></svg>Bruno León</a></td><td></td><td><svg class="mx-auto mb-1" width="20" height="18" fill="#2a3b55"><use href="#talk"/></svg></td><td>Anotaciones</td><td><div class="note d-flex align-items-center"><svg class="mb-1" width="14" height="20" fill="#ff6680"><use href="#place"/></svg><span>Caso ficticio: revisión de propuesta<br>y continuidad del contacto.</span></div></td><td>26/Oct/2026</td><td>HL</td></tr>
  <tr><th>2</th><td class="to-left"><a href="#" class="person d-flex align-items-center"><svg width="16" height="16" fill="currentColor"><use href="#user"/></svg>Valeria Cano</a></td><td></td><td><svg class="mx-auto mb-1" width="20" height="18" fill="#2a3b55"><use href="#talk"/></svg></td><td>Anotaciones</td><td><div class="note d-flex align-items-center"><svg class="mb-1" width="14" height="20" fill="#ff6680"><use href="#place"/></svg><span>Caso ficticio: consulta de<br>seguimiento para demostración del<br>reporte.</span></div></td><td>26/Oct/2026</td><td>HL</td></tr>
  <tr><th>3</th><td class="to-left"><a href="#" class="person d-flex align-items-center"><svg width="16" height="16" fill="currentColor"><use href="#user"/></svg>Diego Fuentes</a></td><td></td><td><svg class="mx-auto mb-1" width="20" height="18" fill="#2a3b55"><use href="#talk"/></svg></td><td>Anotaciones</td><td><div class="note d-flex align-items-center"><svg class="mb-1" width="14" height="20" fill="#ff6680"><use href="#place"/></svg><span>Caso ficticio: revisión de<br>necesidades y próximos pasos<br>comerciales.</span></div></td><td>26/Oct/2026</td><td>HL</td></tr>
  <tr><th>4</th><td class="to-left"><a href="#" class="person d-flex align-items-center"><svg width="16" height="16" fill="currentColor"><use href="#user"/></svg>Lucía Mendoza</a></td><td></td><td><svg class="mx-auto mb-1" width="20" height="18" fill="#2a3b55"><use href="#talk"/></svg></td><td>Anotaciones</td><td><div class="note d-flex align-items-center"><svg class="mb-1" width="14" height="20" fill="#ff6680"><use href="#place"/></svg><span>Llamada de diagnóstico: confirmar<br>el número de sucursales y agendar<br>una demostración.</span></div></td><td>26/Oct/2026</td><td>HL</td></tr>
  </tbody>
 </table>
</main>
<footer class="foot d-flex align-items-center justify-content-between"><span>©2026 <b>Upnify LLC.</b> All rights reserved.</span><i>v5.261026.1339</i></footer>
</div>
</div>
</body>
</html>
